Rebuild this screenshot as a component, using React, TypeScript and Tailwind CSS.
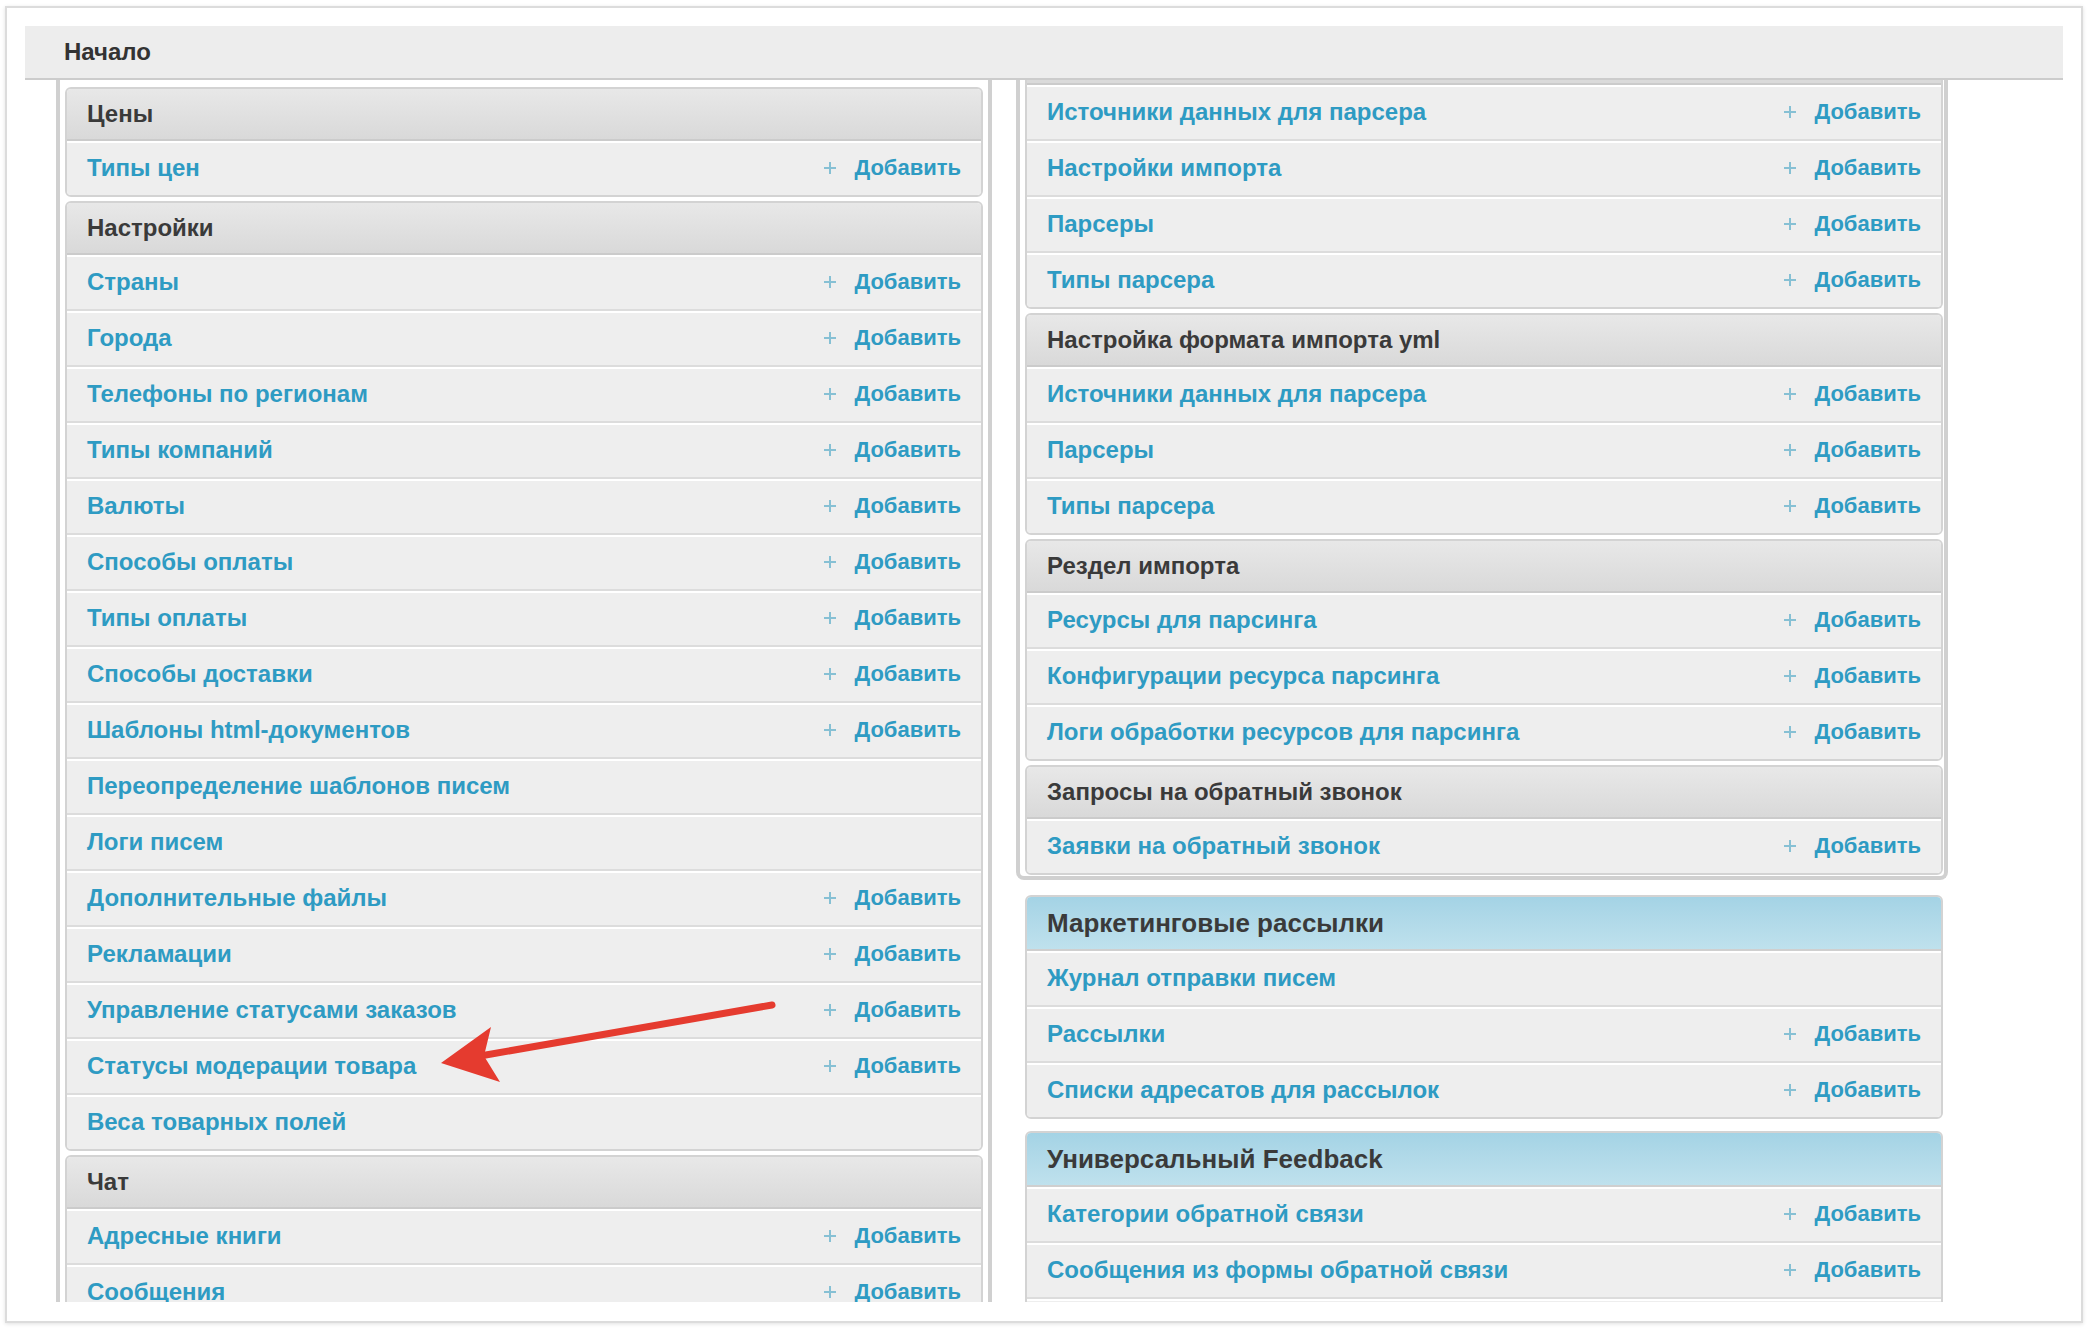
import React from 'react';

type Row = { label: string; add?: boolean };
type Section = { title: string; rows: Row[]; blue?: boolean };

const font = { fontFamily: '"Liberation Sans", Arial, sans-serif' };

const leftSections: Section[] = [
  { title: 'Цены', rows: [{ label: 'Типы цен', add: true }] },
  {
    title: 'Настройки',
    rows: [
      { label: 'Страны', add: true },
      { label: 'Города', add: true },
      { label: 'Телефоны по регионам', add: true },
      { label: 'Типы компаний', add: true },
      { label: 'Валюты', add: true },
      { label: 'Способы оплаты', add: true },
      { label: 'Типы оплаты', add: true },
      { label: 'Способы доставки', add: true },
      { label: 'Шаблоны html-документов', add: true },
      { label: 'Переопределение шаблонов писем' },
      { label: 'Логи писем' },
      { label: 'Дополнительные файлы', add: true },
      { label: 'Рекламации', add: true },
      { label: 'Управление статусами заказов', add: true },
      { label: 'Статусы модерации товара', add: true },
      { label: 'Веса товарных полей' },
    ],
  },
  {
    title: 'Чат',
    rows: [
      { label: 'Адресные книги', add: true },
      { label: 'Сообщения', add: true },
    ],
  },
];

const rightSections: Section[] = [
  {
    title: 'Настройка формата импорта yml',
    rows: [
      { label: 'Источники данных для парсера', add: true },
      { label: 'Парсеры', add: true },
      { label: 'Типы парсера', add: true },
    ],
  },
  {
    title: 'Рездел импорта',
    rows: [
      { label: 'Ресурсы для парсинга', add: true },
      { label: 'Конфигурации ресурса парсинга', add: true },
      { label: 'Логи обработки ресурсов для парсинга', add: true },
    ],
  },
  {
    title: 'Запросы на обратный звонок',
    rows: [{ label: 'Заявки на обратный звонок', add: true }],
  },
];

const blueSections: Section[] = [
  {
    title: 'Маркетинговые рассылки',
    blue: true,
    rows: [
      { label: 'Журнал отправки писем' },
      { label: 'Рассылки', add: true },
      { label: 'Списки адресатов для рассылок', add: true },
    ],
  },
  {
    title: 'Универсальный Feedback',
    blue: true,
    rows: [
      { label: 'Категории обратной связи', add: true },
      { label: 'Сообщения из формы обратной связи', add: true },
      { label: 'Обращения', add: true },
    ],
  },
];

function PlusIcon() {
  return (
    <svg width="14" height="14" viewBox="0 0 14 14" className="shrink-0">
      <path d="M7 1v12M1 7h12" stroke="#86c0d4" strokeWidth="2" />
    </svg>
  );
}

function ItemRow({ row, last }: { row: Row; last: boolean }) {
  return (
    <div
      className={`flex items-center justify-between px-[20px] pb-[2px] bg-[#eeeeee] border-t-2 border-white ${
        last ? 'h-[54px]' : 'h-[56px] border-b-2 border-b-[#dcdcdc]'
      }`}
    >
      <span className="text-[24px] font-bold text-[#2e9bc3] leading-none">{row.label}</span>
      {row.add && (
        <span className="flex items-center gap-[17px] text-[22px] font-bold text-[#2e9bc3] leading-none">
          <PlusIcon />
          Добавить
        </span>
      )}
    </div>
  );
}

function Panel({ section, stub }: { section: Section; stub?: boolean }) {
  return (
    <div
      className={`w-[918px] border-2 border-[#d3d3d3] overflow-hidden ${
        stub ? 'border-t-0 rounded-b-[6px]' : 'rounded-[6px]'
      }`}
    >
      {stub ? (
        <div className="h-[3px] bg-[#dadada] border-b-2 border-[#cbcbcb] box-content" />
      ) : section.blue ? (
        <div className="h-[52px] flex items-center px-[20px] bg-gradient-to-b from-[#a4d3e5] to-[#bfe1ed] border-b-2 border-[#cfcfcf] box-content">
          <span className="text-[26px] font-bold text-[#3a3a3a] leading-none">{section.title}</span>
        </div>
      ) : (
        <div className="h-[50px] flex items-center px-[20px] bg-gradient-to-b from-[#e8e8e8] to-[#d9d9d9] border-b-2 border-[#cbcbcb] box-content">
          <span className="text-[24px] font-bold text-[#3a3a3a] leading-none">{section.title}</span>
        </div>
      )}
      {section.rows.map((r, i) => (
        <ItemRow key={r.label} row={r} last={i === section.rows.length - 1} />
      ))}
    </div>
  );
}

export default function App() {
  const firstRight: Section = {
    title: '',
    rows: [
      { label: 'Источники данных для парсера', add: true },
      { label: 'Настройки импорта', add: true },
      { label: 'Парсеры', add: true },
      { label: 'Типы парсера', add: true },
    ],
  };

  return (
    <div className="w-[2088px] h-[1328px] bg-white relative overflow-hidden" style={font}>
      <div className="ml-[5px] mt-[6px] w-[2078px] h-[1317px] border-2 border-[#dcdcdc] shadow-[0_1px_4px_rgba(0,0,0,0.12)] pt-[18px] px-[18px]">
        <div className="h-[52px] bg-[#ededed] border-b-2 border-[#cccccc] flex items-center pl-[39px] box-content">
          <span className="text-[24px] font-bold text-[#333333] leading-none">Начало</span>
        </div>
        <div className="h-[1222px] overflow-hidden flex items-start gap-[24px] pl-[31px]">
          <div className="w-[936px] border-x-4 border-[#d0d0d0] px-[5px] pt-[7px] flex flex-col gap-[4px] box-border">
            {leftSections.map((s) => (
              <Panel key={s.title} section={s} />
            ))}
          </div>
          <div className="flex flex-col">
            <div className="w-[932px] border-x-4 border-b-4 border-[#d0d0d0] rounded-b-[8px] pl-[5px] pr-[1px] pb-[1px] flex flex-col gap-[4px]">
              <Panel section={firstRight} stub />
              {rightSections.map((s) => (
                <Panel key={s.title} section={s} />
              ))}
            </div>
            <div className="ml-[9px] mt-[15px] flex flex-col gap-[12px]">
              {blueSections.map((s) => (
                <Panel key={s.title} section={s} />
              ))}
            </div>
          </div>
        </div>
      </div>

      <svg className="absolute left-0 top-0 pointer-events-none" width="2088" height="1328">
        <line x1="772" y1="1005" x2="480" y2="1056" stroke="#e53b2f" strokeWidth="7" strokeLinecap="round" />
        <polygon points="441,1063 491,1027 484,1056 500,1082" fill="#e53b2f" />
      </svg>
    </div>
  );
}
